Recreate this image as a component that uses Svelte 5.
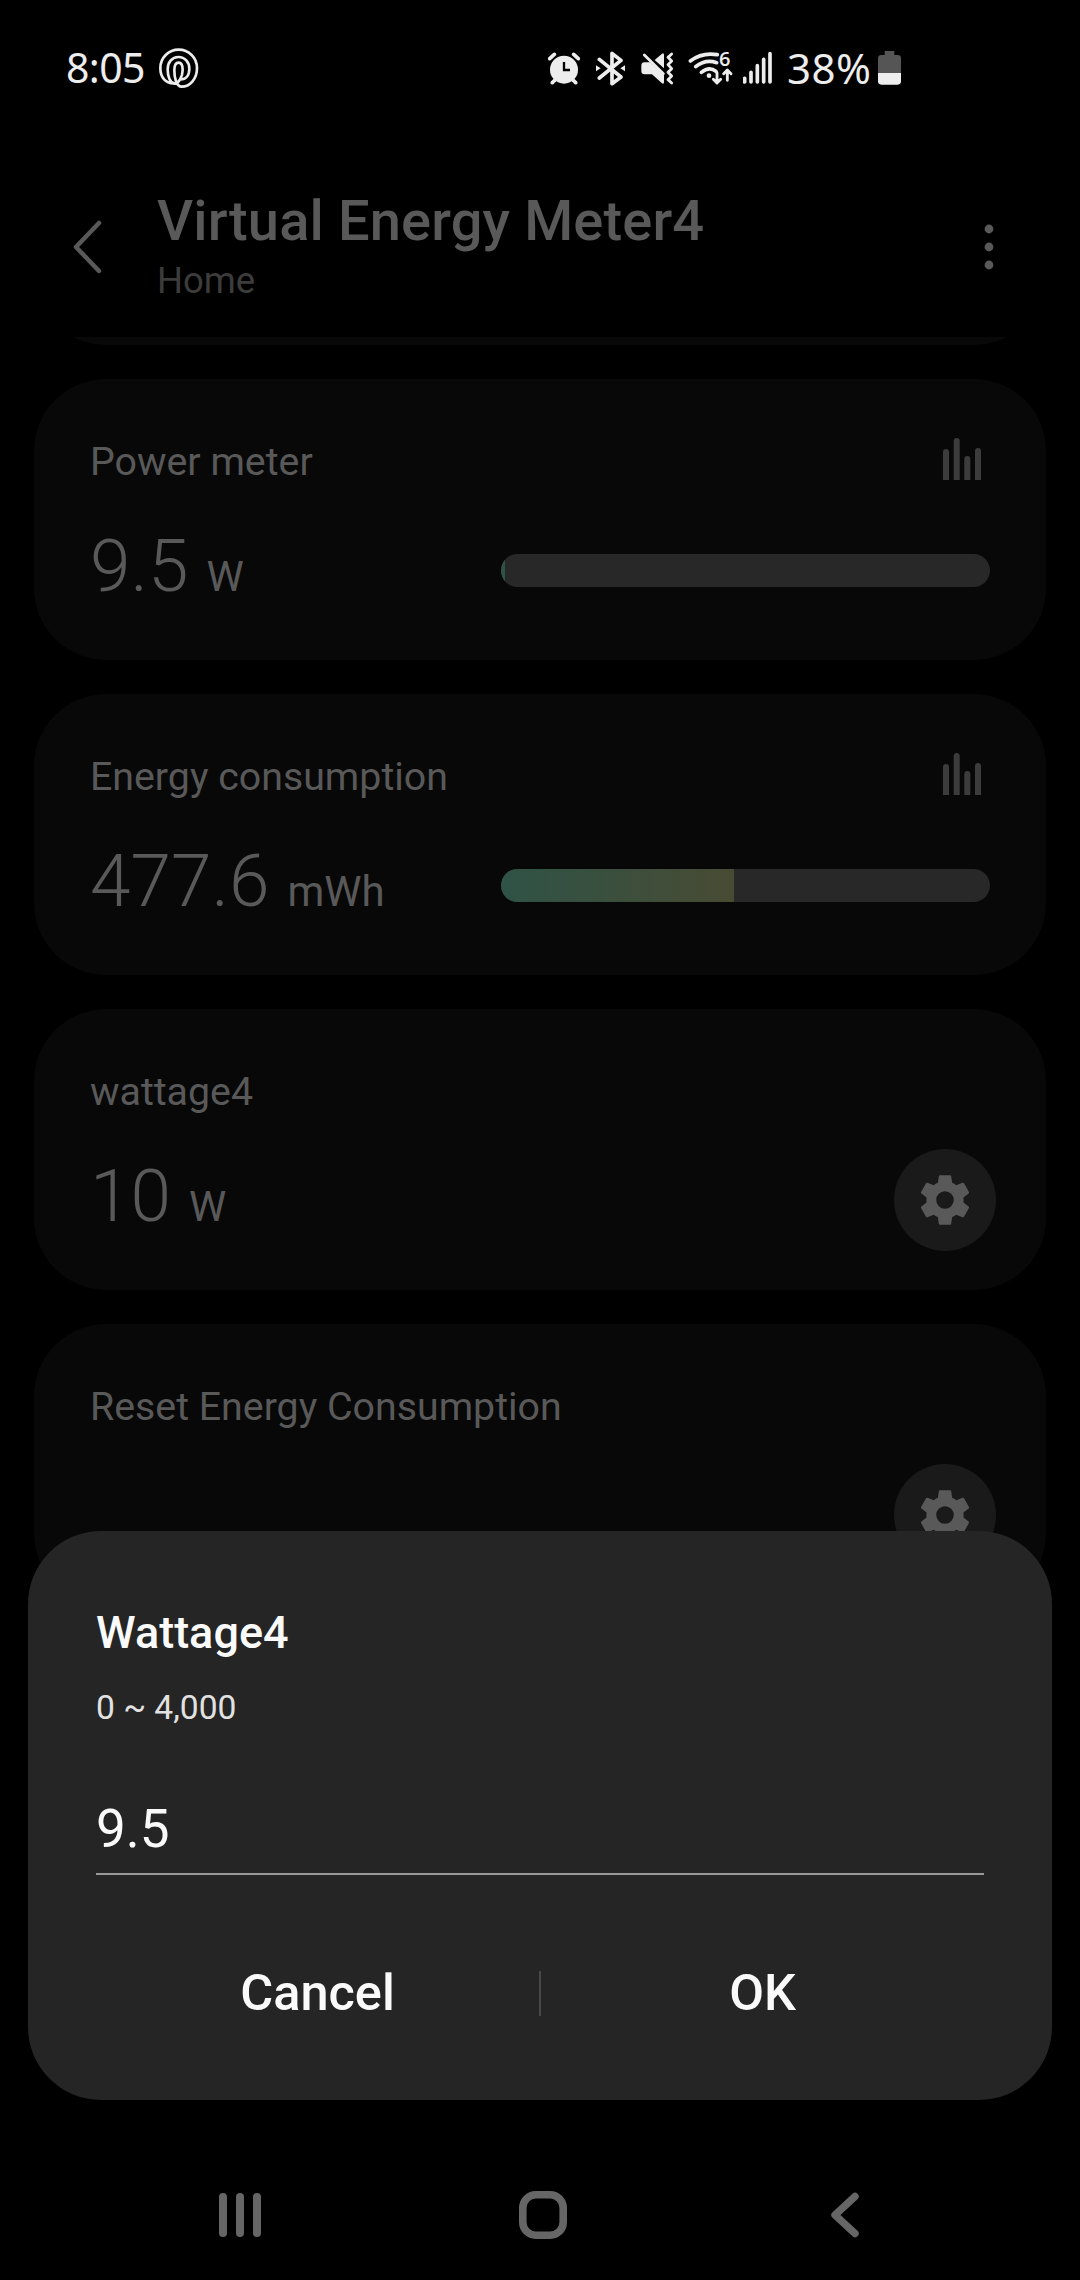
<script>
	let device = { name: 'Virtual Energy Meter4', room: 'Home' };

	let cards = [
		{ label: 'Power meter', value: '9.5', unit: 'W', type: 'meter', percent: 0.8 },
		{ label: 'Energy consumption', value: '477.6', unit: 'mWh', type: 'meter', percent: 47.7 },
		{ label: 'wattage4', value: '10', unit: 'W', type: 'setting' },
		{ label: 'Reset Energy Consumption', value: '', unit: '', type: 'setting' }
	];

	let open = true;
	let input = '9.5';

	function closeDialog() {
		open = false;
	}

	function saveWattage() {
		cards[2].value = input;
		open = false;
	}
</script>

<div class="screen">
	<div class="status">
		<span class="time">8:05</span>
		<svg class="swirl" viewBox="356 55 120 120">
			<path
				d="M404 161C374 163 360 141 360 115A55 55 0 0 1 415 60A55 55 0 0 1 470 115C470 149 448 171 424 171C407 171 402 142 402 122C402 106 408 99 415 99C423 99 427 108 427 121C427 141 414 163 402 162C389 159 382 140 382 119C382 97 396 82 414 82C434 82 447 98 447 117C447 138 436 149 421 149"
			/>
		</svg>

		<div class="indicators">
			<!-- alarm -->
			<svg class="alarm" viewBox="54 60 96 108">
				<circle cx="102" cy="119" r="42" fill="#ededed" />
				<path d="M59 86L73 73M145 86L131 73M67 158L75 150M137 158L129 150" class="line" />
				<path d="M102 96V120H120" stroke="#000" stroke-width="7" fill="none" />
			</svg>
			<!-- bluetooth -->
			<svg class="bluetooth" viewBox="198 60 87 108">
				<path d="M208 88L273 141L246 161V70L273 91L208 144" class="line" />
				<path d="M198 106L212 115L198 124ZM285 106L271 115L285 124Z" fill="#ededed" />
			</svg>
			<!-- vibrate -->
			<svg class="mute" viewBox="333 60 99 108">
				<path
					d="M344 97H360L402 136V156Q402 164 395 159L366 133H344Q334 133 334 124V107Q334 97 344 97ZM374 90L396 71Q402 67 402 75V115Z"
					fill="#ededed"
				/>
				<path d="M350 75L404 125" stroke="#000" stroke-width="7" />
				<path d="M343 75L400 131" class="line thin" />
				<path d="M425 72L414 82L425 93L414 104L425 116L414 127L425 138L414 149L425 159" class="line thin" />
			</svg>
			<!-- wifi 6 -->
			<svg class="wifi" viewBox="477 60 132 108">
				<path d="M481 93Q516 66 562 74M497 110Q527 86 560 98M514 127Q538 108 558 124" class="line" />
				<circle cx="537" cy="137" r="7" fill="#ededed" />
				<path d="M561 128V158M550 148L561 159L572 148M592 151V121M581 131L592 120L603 131" class="line thin" />
				<text x="567" y="108">6</text>
			</svg>
			<!-- signal -->
			<svg class="signal" viewBox="639 60 87 108">
				<path d="M644 145V156M663 127V156M682 107V156M701 88V156M720 71V156" class="line" />
			</svg>
			<span class="battery-text">38%</span>
			<svg class="battery" viewBox="1044 60 69 108">
				<path
					d="M1064 63H1093V75H1103Q1113 75 1113 85V130H1044V85Q1044 75 1054 75H1064Z"
					fill="#555"
				/>
				<path d="M1044 129H1113V154Q1113 164 1103 164H1054Q1044 164 1044 154Z" fill="#ededed" />
			</svg>
		</div>
	</div>

	<div class="header">
		<svg class="back" viewBox="0 0 34 56">
			<path d="M29 4L6 28L29 52" />
		</svg>
		<div class="titles">
			<h1>{device.name}</h1>
			<p>{device.room}</p>
		</div>
		<svg class="more" viewBox="0 0 10 46">
			<circle cx="5" cy="5" r="4.4" />
			<circle cx="5" cy="23" r="4.4" />
			<circle cx="5" cy="41" r="4.4" />
		</svg>
	</div>

	<div class="list">
		<div class="card scrolled"></div>
		{#each cards as card}
			<div class="card">
				<div class="top">
					<span class="label">{card.label}</span>
					{#if card.type === 'meter'}
						<svg class="chart" viewBox="0 0 38 44">
							<path d="M0 43V15a3 3 0 0 1 6 0V43ZM10.7 43V4a3 3 0 0 1 6 0V43ZM21.3 43V22a3 3 0 0 1 6 0V43ZM32 43V14a3 3 0 0 1 6 0V43Z" />
						</svg>
					{/if}
				</div>
				<div class="bottom">
					<div class="reading">
						<span class="value">{card.value}</span>
						<span class="unit">{card.unit}</span>
					</div>
					{#if card.type === 'meter'}
						<div class="bar">
							<div class="fill" style="width: {card.percent}%"></div>
						</div>
					{:else}
						<div class="gear">
							<svg viewBox="0 0 24 24">
								<path
									d="M19.14 12.94c.04-.3.06-.61.06-.94 0-.32-.02-.64-.07-.94l2.03-1.58c.18-.14.23-.41.12-.61l-1.92-3.32c-.12-.22-.37-.29-.59-.22l-2.39.96c-.5-.38-1.03-.7-1.62-.94l-.36-2.54c-.04-.24-.24-.41-.48-.41h-3.84c-.24 0-.43.17-.47.41l-.36 2.54c-.59.24-1.13.57-1.62.94l-2.39-.96c-.22-.08-.47 0-.59.22L2.74 8.87c-.12.21-.08.47.12.61l2.03 1.58c-.05.3-.09.63-.09.94s.02.64.07.94l-2.03 1.58c-.18.14-.23.41-.12.61l1.92 3.32c.12.22.37.29.59.22l2.39-.96c.5.38 1.03.7 1.62.94l.36 2.54c.05.24.24.41.48.41h3.84c.24 0 .44-.17.47-.41l.36-2.54c.59-.24 1.13-.56 1.62-.94l2.39.96c.22.08.47 0 .59-.22l1.92-3.32c.12-.22.07-.47-.12-.61l-2.01-1.58zM12 15.4a3.4 3.4 0 1 1 0-6.8 3.4 3.4 0 0 1 0 6.8z"
								/>
							</svg>
						</div>
					{/if}
				</div>
			</div>
		{/each}
	</div>

	<div class="nav">
		<svg viewBox="0 0 50 50">
			<path d="M7 7V43M24 7V43M41 7V43" stroke-width="8" />
		</svg>
		<svg viewBox="0 0 50 50">
			<rect x="4.8" y="4.8" width="40.4" height="40.4" rx="13" stroke-width="7.6" />
		</svg>
		<svg viewBox="0 0 50 50">
			<path d="M36 6.5L16 25L36 43.5" stroke-width="7.4" />
		</svg>
	</div>

	{#if open}
		<div class="dialog">
			<h2>Wattage4</h2>
			<p>0 ~ 4,000</p>
			<input type="text" bind:value={input} />
			<div class="actions">
				<button on:click={closeDialog}>Cancel</button>
				<div class="divider"></div>
				<button on:click={saveWattage}>OK</button>
			</div>
		</div>
	{/if}
</div>

<style>
	:global(body) {
		background: #000;
	}

	.screen {
		position: relative;
		box-sizing: border-box;
		width: 1080px;
		height: 2280px;
		display: flex;
		flex-direction: column;
		overflow: hidden;
		background: #000;
		font-family: Roboto, sans-serif;
		color: #595959;
	}

	h1,
	h2,
	p {
		margin: 0;
	}

	svg {
		display: block;
		flex: none;
	}

	.status {
		height: 136px;
		box-sizing: border-box;
		padding: 0 179px 0 66px;
		display: flex;
		align-items: center;
		font-family: 'Noto Sans', sans-serif;
		font-size: 41px;
		color: #ededed;
	}

	.status span {
		margin-top: -2px;
	}

	.time {
		letter-spacing: -0.6px;
	}

	.swirl {
		width: 40px;
		height: 40px;
		margin-left: 14px;
		fill: none;
		stroke: #ededed;
		stroke-width: 8;
	}

	.indicators {
		margin-left: auto;
		display: flex;
		align-items: center;
	}

	.indicators svg {
		height: 36px;
	}

	.line {
		fill: none;
		stroke: #ededed;
		stroke-width: 11;
		stroke-linecap: round;
		stroke-linejoin: round;
	}

	.thin {
		stroke-width: 8.5;
	}

	.wifi text {
		font-family: 'Open Sans', sans-serif;
		font-size: 60px;
		font-weight: 600;
		fill: #ededed;
	}

	.alarm {
		width: 32px;
	}

	.bluetooth {
		width: 29px;
		margin-left: 16px;
	}

	.mute {
		width: 33px;
		margin-left: 16px;
	}

	.wifi {
		width: 44px;
		margin-left: 15px;
		overflow: visible;
	}

	.signal {
		width: 29px;
		margin-left: 10px;
	}

	.battery-text {
		margin-left: 15px;
		width: 91px;
		font-size: 42px;
		letter-spacing: 0.5px;
	}

	.battery {
		width: 23px;
	}

	.header {
		height: 201px;
		box-sizing: border-box;
		padding: 0 86px 0 70px;
		display: flex;
		align-items: flex-start;
	}

	.back {
		width: 34px;
		height: 56px;
		margin-top: 83px;
		fill: none;
		stroke: #595959;
		stroke-width: 4.5;
		stroke-linecap: round;
		stroke-linejoin: round;
	}

	.titles {
		margin: 52px auto 0 53px;
	}

	h1 {
		font-size: 56px;
		line-height: 66px;
		font-weight: 500;
		letter-spacing: 0.15px;
	}

	.titles p {
		font-size: 36.5px;
		line-height: 42px;
		margin-top: 6px;
		color: #3c3c3c;
	}

	.more {
		width: 10px;
		height: 46px;
		margin-top: 88px;
		fill: #595959;
	}

	.list {
		flex: 1;
		min-height: 0;
		overflow: hidden;
		padding: 0 34px;
		display: flex;
		flex-direction: column;
		gap: 34px;
	}

	.card {
		box-sizing: border-box;
		height: 281px;
		flex: none;
		border-radius: 72px;
		padding: 59px 50px 0 56px;
		background: #080808;
	}

	.scrolled {
		margin-top: -273px;
	}

	.top {
		height: 88px;
		display: flex;
		justify-content: space-between;
	}

	.label {
		font-size: 39.3px;
		line-height: 48px;
	}

	.chart {
		width: 38px;
		height: 44px;
		margin: -1px 15px 0 0;
		fill: #3c3c3c;
	}

	.bottom {
		display: flex;
		justify-content: space-between;
		align-items: center;
		height: 102px;
		margin-top: -11px;
	}

	.reading {
		display: flex;
		align-items: baseline;
	}

	.value {
		font-size: 73px;
		font-weight: 300;
	}

	.unit {
		margin-left: 18px;
		font-size: 42px;
	}

	.bar {
		width: 489px;
		height: 33px;
		margin: 8px 6px 0 0;
		border-radius: 17px;
		overflow: hidden;
		background: #282828;
	}

	.fill {
		height: 100%;
		background: linear-gradient(90deg, #2f5347, #484b33) left / 233px 100%;
	}

	.gear {
		width: 102px;
		height: 102px;
		margin-top: 8px;
		border-radius: 50%;
		display: flex;
		align-items: center;
		justify-content: center;
		background: #1a1a1a;
	}

	.gear svg {
		width: 62px;
		height: 62px;
		fill: #595959;
	}

	.nav {
		height: 130px;
		padding: 0 211px 0 216px;
		display: flex;
		align-items: center;
		justify-content: space-between;
	}

	.nav svg {
		width: 50px;
		height: 50px;
		fill: none;
		stroke: #666;
		stroke-linecap: round;
		stroke-linejoin: round;
	}

	.dialog {
		position: absolute;
		left: 28px;
		right: 28px;
		bottom: 180px;
		height: 569px;
		box-sizing: border-box;
		padding: 75px 68px 0;
		border-radius: 73px;
		background: #252525;
		color: #fafafa;
	}

	h2 {
		font-size: 45px;
		line-height: 54px;
		font-weight: 500;
	}

	.dialog p {
		margin-top: 28px;
		font-size: 33.6px;
		line-height: 40px;
		color: #e2e2e2;
	}

	input {
		display: block;
		box-sizing: border-box;
		width: 888px;
		height: 100px;
		margin-top: 47px;
		padding: 9px 0 0;
		border: none;
		border-bottom: 2px solid #999;
		border-radius: 0;
		outline: none;
		background: none;
		font-family: inherit;
		font-size: 53px;
		color: inherit;
	}

	.actions {
		margin-top: 68px;
		display: flex;
		align-items: center;
		height: 100px;
	}

	button {
		flex: 1;
		border: none;
		padding: 0 0 2px;
		background: none;
		font-family: inherit;
		font-size: 50.5px;
		font-weight: 500;
		color: inherit;
	}

	.divider {
		width: 2px;
		height: 45px;
		background: #484848;
	}
</style>
